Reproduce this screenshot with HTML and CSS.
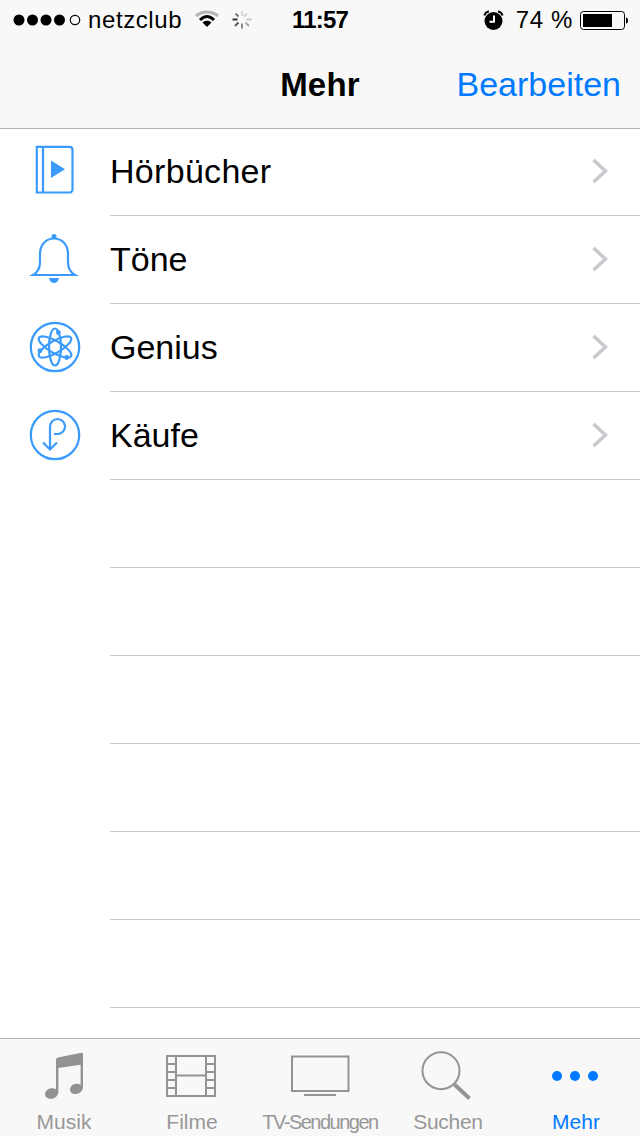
FILE: index.html
```html
<!DOCTYPE html>
<html lang="de">
<head>
<meta charset="utf-8">
<title>Mehr</title>
<link rel="stylesheet" href="styles.css">
</head>
<body>
<div class="app">
  <header class="top">
    <div class="status">
      <div class="status-left">
        <svg class="signal" viewBox="12 12 70 16" width="70" height="16">
          <circle cx="18" cy="20" r="5.5"/><circle cx="31.5" cy="20" r="5.5"/><circle cx="45" cy="20" r="5.5"/><circle cx="58.5" cy="20" r="5.5"/>
          <circle class="hollow" cx="74" cy="20" r="4.7"/>
        </svg>
        <span class="carrier">netzclub</span>
        <svg class="wifi" viewBox="194 10 26 22" width="26" height="22">
          <path class="wifi-far" d="M196 17C202.500 11.500 211.500 11.500 218 17"/>
          <path class="wifi-mid" d="M200 21C204.500 16.500 209.500 16.500 214 21"/>
          <path class="wifi-in" d="M207 28L202.500 23.500C205 21 209 21 211.500 23.500Z"/>
        </svg>
        <svg class="spin" viewBox="231 10 22 22" width="22" height="22">
          <path class="s1" d="M242 12v5"/><path class="s2" d="M247 14.6l-3 3"/><path class="s3" d="M251.5 20.5h-5"/><path class="s4" d="M249 27l-3.5-3.5"/>
          <path class="s5" d="M242 24.5v5"/><path class="s6" d="M238.5 23.5l-3.5 3.5"/><path class="s7" d="M237.5 20.5h-5"/><path class="s8" d="M238.5 17.5l-3-3"/>
        </svg>
      </div>
      <div class="clock">11:57</div>
      <div class="status-right">
        <svg class="alarm" viewBox="482 9 22 22" width="22" height="22">
          <circle cx="492.5" cy="21" r="9"/>
          <path class="alarm-hand" d="M493 15.5V21.8H488.5"/>
          <path class="alarm-ear" d="M483.5 15.5C484 13 485.500 11.800 488 11.500M501.500 15.500C501 13 499.500 11.800 497 11.500"/>
        </svg>
        <span class="percent">74 %</span>
        <svg class="battery" viewBox="579 10 49 20" width="49" height="20">
          <rect class="batt-case" x="580.500" y="11.500" width="44" height="18" rx="3"/>
          <rect x="583" y="14" width="29" height="13"/>
          <path d="M626 17.500C627.500 17.800 628 18.800 628 20.500C628 22.200 627.500 23.200 626 23.500Z"/>
        </svg>
      </div>
    </div>
    <div class="nav">
      <div></div>
      <div class="nav-title">Mehr</div>
      <div class="nav-action">Bearbeiten</div>
    </div>
  </header>

  <main class="list">
    <div class="row">
      <svg class="row-icon" viewBox="22 140 64 63" width="64" height="63">
        <path class="line" d="M36.800 146.800H69.500A3 3 0 0 1 72.500 149.800V189.500A3 3 0 0 1 69.500 192.500H36.800ZM43 146.800V192.500"/>
        <path class="fill" d="M51 160.500L65 169.200L51 178Z"/>
      </svg>
      <div class="row-body"><span class="row-label row-label-wide">Hörbücher</span><svg class="chev" viewBox="0 0 18 28" width="18" height="28"><path d="M2.500 3L14.500 14L2.500 25"/></svg></div>
    </div>
    <div class="row">
      <svg class="row-icon" viewBox="22 228 64 63" width="64" height="63">
        <path class="line" d="M33 275H75C70.500 272.500 68 268 68 262V254C68 244.500 62 238.500 54 238.500C46 238.500 40 244.500 40 254V262C40 268 37.500 272.500 33 275Z"/>
        <circle class="fill" cx="54" cy="236.500" r="2.500"/>
        <path class="fill" d="M49 278H59C58.500 281 56.500 283 54 283C51.500 283 49.500 281 49 278Z"/>
      </svg>
      <div class="row-body"><span class="row-label">Töne</span><svg class="chev" viewBox="0 0 18 28" width="18" height="28"><path d="M2.500 3L14.500 14L2.500 25"/></svg></div>
    </div>
    <div class="row">
      <svg class="row-icon" viewBox="22 316 64 63" width="64" height="63">
        <circle class="line" cx="55" cy="347" r="24.200"/>
        <ellipse class="line" cx="55" cy="347" rx="6" ry="18.500"/>
        <ellipse class="line" cx="55" cy="347" rx="6" ry="18.500" transform="rotate(60 55 347)"/>
        <ellipse class="line" cx="55" cy="347" rx="6" ry="18.500" transform="rotate(120 55 347)"/>
        <circle class="fill" cx="58.300" cy="332.500" r="2.400"/>
        <circle class="fill" cx="40" cy="350.700" r="2.400"/>
        <circle class="fill" cx="66.700" cy="357.500" r="2.400"/>
      </svg>
      <div class="row-body"><span class="row-label">Genius</span><svg class="chev" viewBox="0 0 18 28" width="18" height="28"><path d="M2.500 3L14.500 14L2.500 25"/></svg></div>
    </div>
    <div class="row">
      <svg class="row-icon" viewBox="22 404 64 63" width="64" height="63">
        <circle class="line" cx="55" cy="435" r="24.200"/>
        <path class="line" d="M50 449.500V426.500A7.500 7.500 0 1 1 57.500 434H54M43 442.500L50 449.500L57 442.500"/>
      </svg>
      <div class="row-body"><span class="row-label">Käufe</span><svg class="chev" viewBox="0 0 18 28" width="18" height="28"><path d="M2.500 3L14.500 14L2.500 25"/></svg></div>
    </div>
    <div class="row"><div class="row-body"></div></div>
    <div class="row"><div class="row-body"></div></div>
    <div class="row"><div class="row-body"></div></div>
    <div class="row"><div class="row-body"></div></div>
    <div class="row"><div class="row-body"></div></div>
    <div class="row"><div class="row-body"></div></div>
  </main>

  <nav class="tabs">
    <div class="tab">
      <svg class="tab-icon" viewBox="32 1048 64 56" width="64" height="56">
        <path class="tab-fill" d="M56 1060C56 1058.500 57 1057.700 58 1057.500L81.500 1052.800C82.300 1052.600 83 1053 83 1054V1087C83 1091 79.500 1094 75.500 1094C72 1094 70 1092 70 1089.500C70 1086.500 73 1084 76.500 1083.800C78 1083.700 79.800 1084.200 80.600 1085V1064.700L58.400 1068V1091.500C58.400 1095.500 55 1098.800 51 1098.800C47.500 1098.800 45 1096.800 45 1094C45 1091 48 1088.500 51.500 1088.200C53.300 1088 55 1088.500 56 1089.300Z"/>
      </svg>
      <span class="tab-label">Musik</span>
    </div>
    <div class="tab">
      <svg class="tab-icon" viewBox="160 1048 64 56" width="64" height="56">
        <path class="tab-line" d="M167 1056H215V1096H167ZM176 1056V1096M206 1056V1096M176 1075.500H206M167 1064H176M167 1072H176M167 1080H176M167 1088H176M206 1064H215M206 1072H215M206 1080H215M206 1088H215"/>
      </svg>
      <span class="tab-label">Filme</span>
    </div>
    <div class="tab">
      <svg class="tab-icon" viewBox="288 1048 64 56" width="64" height="56">
        <path class="tab-line" d="M292 1056.500H348.500V1091H292ZM304 1095H336"/>
      </svg>
      <span class="tab-label tab-label-tight">TV-Sendungen</span>
    </div>
    <div class="tab">
      <svg class="tab-icon" viewBox="416 1048 64 56" width="64" height="56">
        <circle class="tab-line" cx="441" cy="1070.700" r="18.500"/>
        <path class="tab-handle" d="M454.500 1084.500L469.500 1098.500"/>
      </svg>
      <span class="tab-label tab-label-snug">Suchen</span>
    </div>
    <div class="tab tab-active">
      <svg class="tab-icon" viewBox="544 1048 64 56" width="64" height="56">
        <circle class="dot" cx="557" cy="1076" r="5"/><circle class="dot" cx="575" cy="1076" r="5"/><circle class="dot" cx="593" cy="1076" r="5"/>
      </svg>
      <span class="tab-label">Mehr</span>
    </div>
  </nav>
</div>
</body>
</html>
```
FILE: styles.css
```css
* { box-sizing: border-box; }
html, body { margin: 0; padding: 0; }
body { font-family: "Liberation Sans", Arial, sans-serif; background: #fff; color: #000; }
.app { width: 640px; height: 1136px; display: flex; flex-direction: column; overflow: hidden; }

.top { position: relative; z-index: 1; height: 129px; background: #f8f8f8; border-bottom: 1px solid #b2b2b2; flex: none; }
.status { height: 40px; display: grid; grid-template-columns: 1fr auto 1fr; align-items: center; font-size: 24px; }
.status-left { display: flex; align-items: center; padding-left: 13px; }
.signal { fill: #000; }
.signal .hollow { fill: none; stroke: #000; stroke-width: 1.2; }
.carrier { margin-left: 5px; letter-spacing: 0.6px; }
.wifi { margin-left: 12px; }
.wifi-far { fill: none; stroke: #b5b5b5; stroke-width: 3; }
.wifi-mid { fill: none; stroke: #000; stroke-width: 3; }
.wifi-in { fill: #000; }
.spin { margin-left: 11px; }
.spin path { fill: none; stroke-width: 2; }
.s1 { stroke: #d8d8d8; } .s2 { stroke: #cfcfcf; } .s3 { stroke: #c4c4c4; } .s4 { stroke: #a8a8a8; }
.s5 { stroke: #8a8a8a; } .s6 { stroke: #555; } .s7 { stroke: #333; } .s8 { stroke: #777; }
.clock { font-weight: 700; font-size: 24px; letter-spacing: -0.8px; }
.status-right { display: flex; align-items: center; justify-content: flex-end; padding-right: 12px; }
.alarm { fill: #000; }
.alarm-hand { fill: none; stroke: #fff; stroke-width: 2; }
.alarm-ear { fill: none; stroke: #000; stroke-width: 2; }
.percent { margin-left: 11px; margin-right: 6px; letter-spacing: 0.65px; }
.batt-case { fill: none; stroke: #000; stroke-width: 1; }

.nav { height: 88px; display: grid; grid-template-columns: 1fr auto 1fr; align-items: center; font-size: 34px; }
.nav-title { font-weight: 700; font-size: 33px; letter-spacing: 0.2px; padding-top: 1px; }
.nav-action { text-align: right; color: #007aff; padding-right: 19px; }

.list { flex: 1; min-height: 0; margin-top: -1px; }
.row { display: flex; height: 88px; }
.row-icon { position: absolute; left: 22px; margin-top: 12px; }
.row-body { flex: 1; margin-left: 110px; border-bottom: 1px solid #c8c7cc; display: flex; align-items: center; justify-content: space-between; padding-right: 31px; font-size: 34px; }
.row-label-wide { letter-spacing: 0.3px; }
.chev { display: block; margin-bottom: 2px; }
.chev path { fill: none; stroke: #c7c7cc; stroke-width: 3.4; }
.line { fill: none; stroke: #3a9bfc; stroke-width: 2.2; }
.fill { fill: #3a9bfc; }

.tabs { height: 98px; flex: none; background: #f8f8f8; border-top: 1px solid #b2b2b2; display: grid; grid-template-columns: repeat(5, 1fr); padding-top: 9px; }
.tab { display: flex; flex-direction: column; align-items: center; }
.tab-icon { display: block; }
.tab-line { fill: none; stroke: #949494; stroke-width: 2; }
.tab-fill { fill: #929292; }
.tab-handle { fill: none; stroke: #949494; stroke-width: 4; }
.dot { fill: #007aff; }
.tab-label { margin-top: 6px; font-size: 21px; line-height: 24px; color: #979797; white-space: nowrap; }
.tab-label-tight { font-size: 20px; letter-spacing: -1.5px; }
.tab-label-snug { letter-spacing: -0.3px; }
.tab-active .tab-label { color: #007aff; }
```
